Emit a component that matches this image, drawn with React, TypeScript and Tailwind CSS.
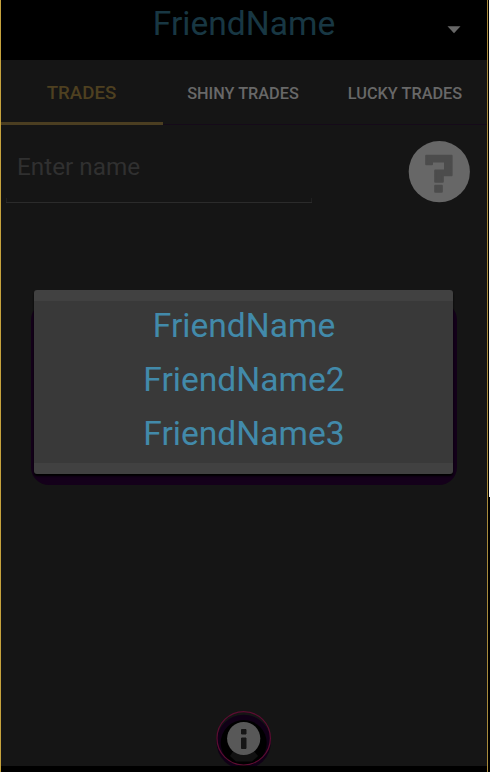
const friends = ["FriendName", "FriendName2", "FriendName3"];

function Header() {
  return (
    <header className="relative flex h-[60px] justify-center bg-black">
      <span className="mt-1 text-[33.6px] leading-10 text-[#183743]">FriendName</span>
      <svg className="absolute left-[446px] top-[26px]" width="14" height="8" viewBox="0 0 14 8">
        <path d="M0.5 0.3h13L7 7.3z" fill="#676767" />
      </svg>
    </header>
  );
}

function Tabs() {
  return (
    <nav className="grid h-[65px] grid-cols-3 border-b border-[#150a19] text-center font-medium leading-[66px]">
      <div className="-mb-px h-[65px] border-b-[3px] border-[#4b3e21] pr-px text-[18.7px] text-[#4e4020]">TRADES</div>
      <div className="h-16 pr-0.5 text-[16.3px] leading-[67px] text-[#686868]">SHINY TRADES</div>
      <div className="h-16 pr-0.5 text-[16.3px] leading-[67px] text-[#686868]">LUCKY TRADES</div>
    </nav>
  );
}

function HelpIcon() {
  return (
    <svg width="62" height="62" viewBox="0 0 62 62">
      <circle cx="31.3" cy="30.7" r="30.6" fill="#676767" />
      <g fill="#4c4c4c" stroke="#4c4c4c" strokeWidth="2" strokeLinejoin="round">
        <path d="M18.2 14.7H43.600V34.200H34.800V40.700H27.200V29.500H37V20.500H24V23.200H18.200z" />
        <path d="M27.200 44.700H33.800V50.700H27.200z" />
      </g>
    </svg>
  );
}

function InfoIcon() {
  return (
    <svg className="absolute left-[214px] top-[710px]" width="58" height="56" viewBox="0 0 58 56">
      <circle cx="28.7" cy="32" r="27.2" fill="#100016" />
      <circle cx="28.7" cy="33" r="23" fill="#000" />
      <path d="M15 46L21 51.500H37L43 46L38 40H19z" fill="#111" />
      <circle cx="28.7" cy="28.5" r="16.6" fill="#585858" />
      <path d="M26.500 19.500h4.500v4.500H26.500zM26.500 28h4.500V38.500H26.500z" fill="#161616" stroke="#161616" strokeLinejoin="round" />
      <circle cx="28.7" cy="28.3" r="26.700" fill="none" stroke="#5c0c31" strokeWidth="1.200" />
    </svg>
  );
}

function FriendMenu() {
  return (
    <div className="absolute left-[30px] top-[290px] h-[195px] w-[426px]">
      <div className="absolute inset-x-0 bottom-0 top-3 rounded-[18px] bg-[#14001a]" />
      <ul className="relative ml-[3px] h-[184px] w-[419px] rounded-[3px] border-y-[11px] border-[#414141] bg-[#393939] text-center text-[33.6px] text-[#428aaa] shadow-[0_2px_2px_#000]">
        {friends.map((name) => (
          <li key={name} className="h-[54px] pl-px leading-[50px]">{name}</li>
        ))}
      </ul>
    </div>
  );
}

export default function App() {
  return (
    <div className="flex h-[772px] w-[490px] bg-black font-[Roboto,sans-serif]">
      <main className="relative flex w-[488px] flex-col border-x border-l-[#c5a23d] border-r-[#a98b3c] bg-[#151515]">
        <Header />
        <Tabs />
        <section className="flex h-[90px] pl-[5px] pr-[17px] pt-4">
          <div className="relative h-[62px] w-[306px] border-b border-[#2b2b2b] pl-[11px] text-[24.3px] leading-[51px] text-[#303030]">
            Enter name
            <div className="absolute inset-x-0 bottom-0 h-1 border-x border-[#202020]" />
          </div>
          <div className="ml-auto"><HelpIcon /></div>
        </section>
        <FriendMenu />
        <div className="mt-auto h-1.5 bg-black" />
        <InfoIcon />
      </main>
      <aside className="ml-px h-[497px] w-px bg-white" />
    </div>
  );
}
